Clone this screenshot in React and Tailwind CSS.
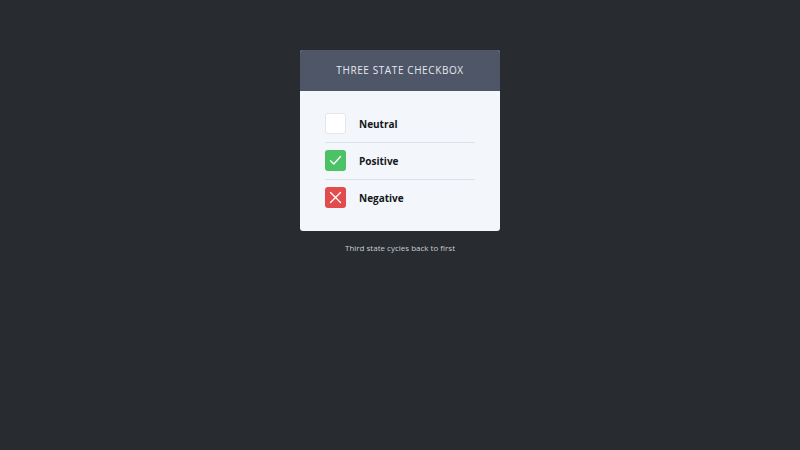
import React from "react";

const rows = [
  { label: "Neutral", state: 0 },
  { label: "Positive", state: 1 },
  { label: "Negative", state: 2 },
];

function Box({ state }) {
  if (state === 1)
    return (
      <div className="w-[21px] h-[21px] rounded-[3px] bg-[#4bc266] flex items-center justify-center">
        <svg width="15" height="15" viewBox="0 0 15 15" fill="none" stroke="#ffffff" strokeWidth="1.4" strokeLinecap="round" strokeLinejoin="round">
          <path d="M2.5 7.8 L5.8 11 L12.5 3.5" />
        </svg>
      </div>
    );
  if (state === 2)
    return (
      <div className="w-[21px] h-[21px] rounded-[3px] bg-[#e14c4c] flex items-center justify-center">
        <svg width="15" height="15" viewBox="0 0 15 15" fill="none" stroke="#ffffff" strokeWidth="1.3" strokeLinecap="round">
          <path d="M2.5 2.5 L12.5 12.5 M12.5 2.5 L2.5 12.5" />
        </svg>
      </div>
    );
  return <div className="w-[21px] h-[21px] rounded-[3px] bg-white border border-[#e3e7ec]" />;
}

export default function App() {
  return (
    <div
      className="w-full h-[450px] bg-[#282b2f] flex flex-col items-center pt-[50px]"
      style={{ fontFamily: '"Open Sans", sans-serif' }}
    >
      <div className="w-[200px] rounded-[3px] overflow-hidden bg-[#f3f6fa]">
        <div className="h-[41px] bg-[#4e5668] flex items-center justify-center text-[10px] tracking-[0.6px] text-[#e6e9ee]">
          THREE STATE CHECKBOX
        </div>
        <div className="pt-[22px] pb-[23px] px-[25px]">
          {rows.map((r, i) => (
            <div
              key={r.label}
              className={
                "flex items-center gap-[13px] " +
                (i === 0 ? "pt-0 " : "pt-[7px] ") +
                (i < 2 ? "pb-[8px] border-b border-[#dde2e8]" : "pb-0")
              }
            >
              <Box state={r.state} />
              <span className="mt-[2px] text-[10px] font-bold text-[#15171a]">{r.label}</span>
            </div>
          ))}
        </div>
      </div>
      <div className="mt-[11px] text-[8px] text-[#c9cdd3]">Third state cycles back to first</div>
    </div>
  );
}
